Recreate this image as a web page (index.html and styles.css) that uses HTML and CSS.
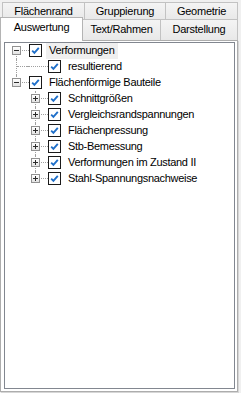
FILE: index.html
```html
<!DOCTYPE html>
<html>
<head>
    <meta charset="UTF-8">
    <title>Auswertung</title>
    <link rel="stylesheet" href="styles.css">
</head>
<body>
<div class="tabs">
    <div class="tab-row back">
        <div class="tab w-fl">Flächenrand</div>
        <div class="tab w-gr">Gruppierung</div>
        <div class="tab w-ge">Geometrie</div>
    </div>
    <div class="tab-row front">
        <div class="tab w-au active">Auswertung</div>
        <div class="tab w-tr">Text/Rahmen</div>
        <div class="tab w-da">Darstellung</div>
    </div>
</div>

<div class="panel">
    <div class="tree">
        <!-- Verformungen -->
        <div class="node">
            <span class="cell vb h"><span class="btn minus"></span></span>
            <span class="chk"><svg width="13" height="13" viewBox="0 0 13 13"><rect x="0.5" y="0.5" width="12" height="12" fill="#fff" stroke="#1a1a1a"/><path d="M3.2 6.6 L5.4 8.8 L9.8 3.9" fill="none" stroke="#1f6fc9" stroke-width="1.9"/></svg></span>
            <span class="label sel">Verformungen</span>
        </div>
        <div class="node">
            <span class="cell v h"></span>
            <span class="cell hf"></span>
            <span class="chk"><svg width="13" height="13" viewBox="0 0 13 13"><rect x="0.5" y="0.5" width="12" height="12" fill="#fff" stroke="#1a1a1a"/><path d="M3.2 6.6 L5.4 8.8 L9.8 3.9" fill="none" stroke="#1f6fc9" stroke-width="1.9"/></svg></span>
            <span class="label">resultierend</span>
        </div>

        <!-- Flächenförmige Bauteile -->
        <div class="node">
            <span class="cell vt h"><span class="btn minus"></span></span>
            <span class="chk"><svg width="13" height="13" viewBox="0 0 13 13"><rect x="0.5" y="0.5" width="12" height="12" fill="#fff" stroke="#1a1a1a"/><path d="M3.2 6.6 L5.4 8.8 L9.8 3.9" fill="none" stroke="#1f6fc9" stroke-width="1.9"/></svg></span>
            <span class="label">Flächenförmige Bauteile</span>
        </div>
        <div class="node">
            <span class="cell"></span>
            <span class="cell v h"><span class="btn plus"></span></span>
            <span class="chk"><svg width="13" height="13" viewBox="0 0 13 13"><rect x="0.5" y="0.5" width="12" height="12" fill="#fff" stroke="#1a1a1a"/><path d="M3.2 6.6 L5.4 8.8 L9.8 3.9" fill="none" stroke="#1f6fc9" stroke-width="1.9"/></svg></span>
            <span class="label">Schnittgrößen</span>
        </div>
        <div class="node">
            <span class="cell"></span>
            <span class="cell v h"><span class="btn plus"></span></span>
            <span class="chk"><svg width="13" height="13" viewBox="0 0 13 13"><rect x="0.5" y="0.5" width="12" height="12" fill="#fff" stroke="#1a1a1a"/><path d="M3.2 6.6 L5.4 8.8 L9.8 3.9" fill="none" stroke="#1f6fc9" stroke-width="1.9"/></svg></span>
            <span class="label">Vergleichsrandspannungen</span>
        </div>
        <div class="node">
            <span class="cell"></span>
            <span class="cell v h"><span class="btn plus"></span></span>
            <span class="chk"><svg width="13" height="13" viewBox="0 0 13 13"><rect x="0.5" y="0.5" width="12" height="12" fill="#fff" stroke="#1a1a1a"/><path d="M3.2 6.6 L5.4 8.8 L9.8 3.9" fill="none" stroke="#1f6fc9" stroke-width="1.9"/></svg></span>
            <span class="label">Flächenpressung</span>
        </div>
        <div class="node">
            <span class="cell"></span>
            <span class="cell v h"><span class="btn plus"></span></span>
            <span class="chk"><svg width="13" height="13" viewBox="0 0 13 13"><rect x="0.5" y="0.5" width="12" height="12" fill="#fff" stroke="#1a1a1a"/><path d="M3.2 6.6 L5.4 8.8 L9.8 3.9" fill="none" stroke="#1f6fc9" stroke-width="1.9"/></svg></span>
            <span class="label">Stb-Bemessung</span>
        </div>
        <div class="node">
            <span class="cell"></span>
            <span class="cell v h"><span class="btn plus"></span></span>
            <span class="chk"><svg width="13" height="13" viewBox="0 0 13 13"><rect x="0.5" y="0.5" width="12" height="12" fill="#fff" stroke="#1a1a1a"/><path d="M3.2 6.6 L5.4 8.8 L9.8 3.9" fill="none" stroke="#1f6fc9" stroke-width="1.9"/></svg></span>
            <span class="label">Verformungen im Zustand II</span>
        </div>
        <div class="node">
            <span class="cell"></span>
            <span class="cell vt h"><span class="btn plus"></span></span>
            <span class="chk"><svg width="13" height="13" viewBox="0 0 13 13"><rect x="0.5" y="0.5" width="12" height="12" fill="#fff" stroke="#1a1a1a"/><path d="M3.2 6.6 L5.4 8.8 L9.8 3.9" fill="none" stroke="#1f6fc9" stroke-width="1.9"/></svg></span>
            <span class="label">Stahl-Spannungsnachweise</span>
        </div>
    </div>
</div>
</body>
</html>
```

FILE: styles.css
```css
* {
    box-sizing: border-box;
}

body {
    margin: 0;
    padding: 0;
    width: 241px;
    height: 393px;
    background-color: #f0f0f0;
    font-family: "Liberation Sans", Arial, sans-serif;
    font-size: 11px;
    color: #000;
}

/* tab strip, two rows */
.tabs {
    padding-top: 2px;
}

.tab-row {
    display: flex;
}

.tab-row.back {
    height: 17px;
    padding-left: 2px;
}

.tab-row.front {
    height: 21px;
}

.tab {
    flex: none;
    text-align: center;
    border: 1px solid #c2c2c2;
    border-bottom: none;
    background: linear-gradient(#f4f4f4, #e8e8e8);
    letter-spacing: -0.25px;
    white-space: nowrap;
}

.tab + .tab {
    margin-left: -1px;
}

.back .tab {
    height: 18px;
    line-height: 17px;
}

.front .tab {
    height: 21px;
    line-height: 19px;
}

.front .tab.active {
    position: relative;
    z-index: 1;
    height: 24px;
    margin-top: -2px;
    line-height: 18px;
    background: #fff;
    border-color: #b4b4b4;
}

.w-fl { width: 83px; }
.w-gr { width: 82px; }
.w-ge { width: 73px; }
.w-au { width: 83px; }
.w-tr { width: 79px; }
.w-da { width: 78px; }

/* page behind the tabs */
.panel {
    width: 238px;
    height: 352px;
    background: #fff;
    border: 1px solid #adadad;
    box-shadow: 1px 1px 0 #d6d6d6;
    padding: 1px 2px 2px 3px;
}

.tree {
    height: 100%;
    border: 1px solid #828790;
    background: #fff;
    padding-left: 2px;
}

.node {
    display: flex;
    align-items: flex-start;
    height: 16px;
}

.cell {
    position: relative;
    flex: none;
    width: 19px;
    height: 16px;
}

.v::before,
.vt::before,
.vb::before {
    content: "";
    position: absolute;
    left: 9px;
    top: 0;
    bottom: 0;
    border-left: 1px dotted #a0a0a0;
}

.vt::before {
    bottom: 8px;
}

.vb::before {
    top: 8px;
}

.h::after,
.hf::after {
    content: "";
    position: absolute;
    left: 10px;
    right: -3px;
    top: 7px;
    border-top: 1px dotted #a0a0a0;
}

.hf::after {
    left: 0;
}

/* expand / collapse button */
.btn {
    position: absolute;
    z-index: 1;
    left: 5px;
    top: 3px;
    width: 9px;
    height: 9px;
    border: 1px solid #919191;
    background: linear-gradient(#ffffff, #e3e3e3);
}

.btn::before {
    content: "";
    position: absolute;
    left: 1px;
    top: 3px;
    width: 5px;
    height: 1px;
    background: #2b2b2b;
}

.btn.plus::after {
    content: "";
    position: absolute;
    left: 3px;
    top: 1px;
    width: 1px;
    height: 5px;
    background: #2b2b2b;
}

.chk {
    flex: none;
    width: 13px;
    height: 13px;
    margin-top: 1px;
    margin-left: 3px;
}

.chk svg {
    display: block;
}

.label {
    margin-left: 4px;
    padding: 0 3px;
    height: 16px;
    line-height: 15px;
    letter-spacing: -0.3px;
    white-space: nowrap;
}

.label.sel {
    background: #efefef;
}
```
